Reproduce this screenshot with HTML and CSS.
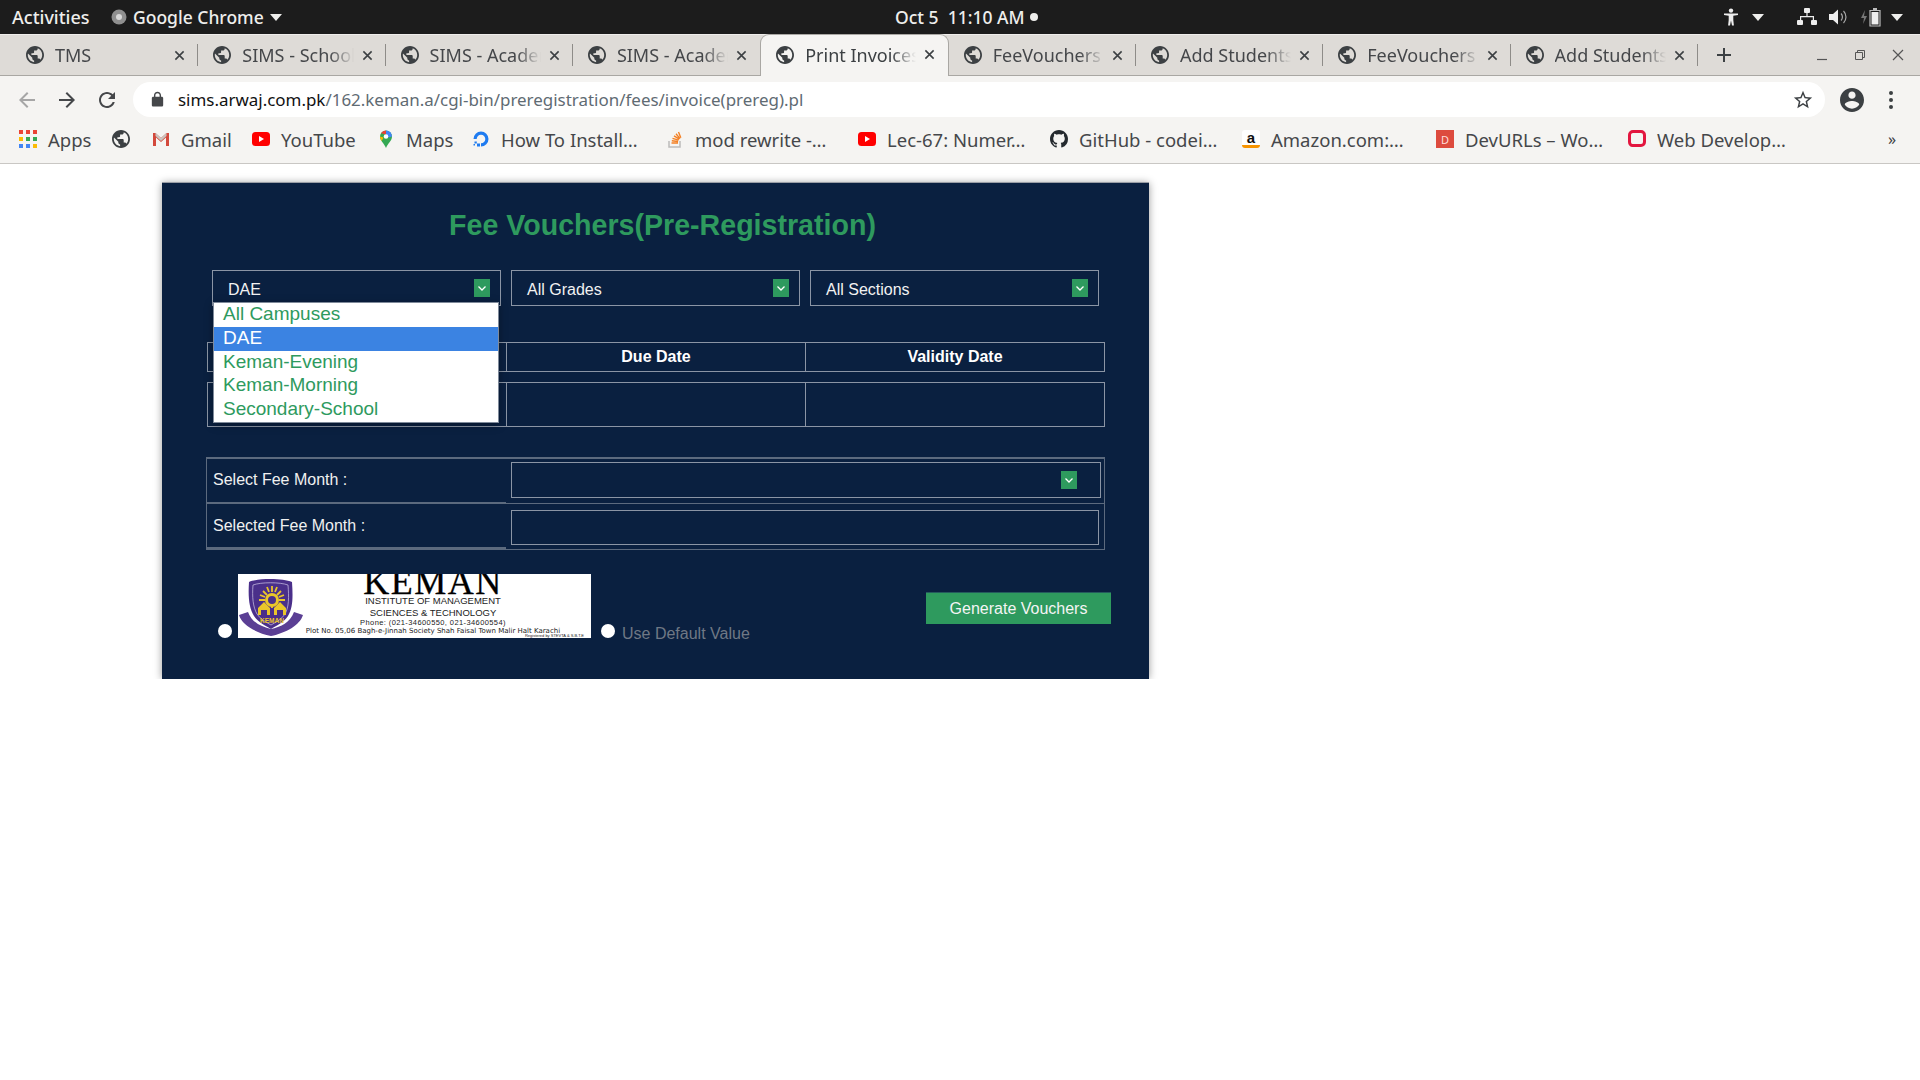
FILE: index.html
```html
<!DOCTYPE html>
<html lang="en">
<head>
  <meta charset="UTF-8">
  <meta name="viewport" content="width=device-width, initial-scale=1.0">
  <title>Fee Vouchers</title>
  <link rel="stylesheet" href="styles.css">
</head>
<body>
  <svg class="defs" width="0" height="0">
    <symbol id="globe" viewBox="2 2 20 20"><path d="M12 2C6.48 2 2 6.48 2 12s4.48 10 10 10 10-4.48 10-10S17.52 2 12 2zm-1 17.93c-3.95-.49-7-3.85-7-7.93 0-.62.08-1.21.21-1.79L9 15v1c0 1.1.9 2 2 2v1.93zm6.9-2.54c-.26-.81-1-1.39-1.9-1.39h-1v-3c0-.55-.45-1-1-1H8v-2h2c.55 0 1-.45 1-1V7h2c1.1 0 2-.9 2-2v-.41c2.93 1.19 5 4.06 5 7.41 0 2.08-.8 3.97-2.1 5.39z"/></symbol>
    <symbol id="close" viewBox="0 0 12 12"><path d="M1.5 1.5l9 9M10.5 1.5l-9 9" stroke="currentColor" stroke-width="1.7" fill="none"/></symbol>
    <symbol id="chev" viewBox="0 0 16 18"><path d="M4.5 7.5L8 11l3.5-3.5" stroke="#fff" stroke-width="1.3" fill="none"/></symbol>
    <symbol id="ytube" viewBox="0 0 18 18"><rect x="0" y="2" width="18" height="14" rx="3.5" fill="#f00"/><path d="M7 6v6l5-3z" fill="#fff"/></symbol>
  </svg>

  <!-- gnome panel -->
  <div class="topbar">
    <div class="topbar-left">
      <span class="activities">Activities</span>
      <svg class="app-icon" width="16" height="16" viewBox="0 0 16 16"><circle cx="8" cy="8" r="7.5" fill="#8f8f8f"/><circle cx="8" cy="8" r="3" fill="#d8d8d8"/></svg>
      <span>Google Chrome</span>
      <span class="caret"></span>
    </div>
    <div class="clock">Oct 5&nbsp; 11:10 AM<span class="clock-dot"></span></div>
    <div class="topbar-right">
      <svg class="ic-person" width="16" height="18" viewBox="0 0 16 18" fill="#eee"><circle cx="8" cy="2.6" r="2.2"/><path d="M1 5.5h14v1.6l-4.7.7V12l.6 5.5H9L8 12.5 7 17.5H5.100L5.700 12V7.800L1 7.100z"/></svg>
      <span class="caret"></span>
      <svg class="ic-net" width="20" height="18" viewBox="0 0 20 18" fill="#eee"><rect x="7" y="0" width="6" height="5" rx="1"/><rect x="0" y="12" width="6" height="5" rx="1"/><rect x="14" y="12" width="6" height="5" rx="1"/><path d="M9.400 5h1.200v3H17v4h-1.200V9.200H4.200V12H3V8h6.400z"/></svg>
      <svg class="ic-vol" width="19" height="18" viewBox="0 0 19 18"><path d="M0 6h4l5-4.500v15L4 12H0z" fill="#eee"/><path d="M12 5.500a5 5 0 0 1 0 7M14.500 3a8.500 8.500 0 0 1 0 12" stroke="#aaa" stroke-width="1.200" fill="none"/></svg>
      <svg class="ic-bat" width="20" height="20" viewBox="0 0 20 20"><path d="M4 3L0 11h3l-1 6 4-8H3z" fill="#777"/><path d="M9 3.500h10V19H9z" fill="none" stroke="#bbb" stroke-width="1.200"/><rect x="12" y="1" width="4" height="2" fill="#bbb"/><rect x="10.500" y="5" width="7" height="12.500" fill="#eee"/></svg>
      <span class="caret"></span>
    </div>
  </div>

  <!-- tab strip -->
  <div class="tabstrip">
    <div class="tab"><svg class="globe"><use href="#globe"/></svg><span class="tab-title">TMS</span><svg class="tab-x"><use href="#close"/></svg></div>
    <div class="tab"><svg class="globe"><use href="#globe"/></svg><span class="tab-title">SIMS - School Management</span><svg class="tab-x"><use href="#close"/></svg></div>
    <div class="tab"><svg class="globe"><use href="#globe"/></svg><span class="tab-title">SIMS - Academic Session</span><svg class="tab-x"><use href="#close"/></svg></div>
    <div class="tab tab-before-active"><svg class="globe"><use href="#globe"/></svg><span class="tab-title">SIMS - Academic Session</span><svg class="tab-x"><use href="#close"/></svg></div>
    <div class="tab tab-active"><svg class="globe"><use href="#globe"/></svg><span class="tab-title">Print Invoices</span><svg class="tab-x"><use href="#close"/></svg></div>
    <div class="tab"><svg class="globe"><use href="#globe"/></svg><span class="tab-title">FeeVouchers</span><svg class="tab-x"><use href="#close"/></svg></div>
    <div class="tab"><svg class="globe"><use href="#globe"/></svg><span class="tab-title">Add Students</span><svg class="tab-x"><use href="#close"/></svg></div>
    <div class="tab"><svg class="globe"><use href="#globe"/></svg><span class="tab-title">FeeVouchers</span><svg class="tab-x"><use href="#close"/></svg></div>
    <div class="tab"><svg class="globe"><use href="#globe"/></svg><span class="tab-title">Add Students</span><svg class="tab-x"><use href="#close"/></svg></div>
    <svg class="new-tab" width="16" height="16" viewBox="0 0 16 16"><path d="M8 1v14M1 8h14" stroke="#3c4043" stroke-width="2"/></svg>
    <div class="win-controls">
      <svg width="12" height="12" viewBox="0 0 12 12"><path d="M1 10.500h10" stroke="#555" stroke-width="1.200"/></svg>
      <svg width="12" height="12" viewBox="0 0 12 12"><path d="M1.500 3.500h7v7h-7zM3.500 3.500v-2h7v7h-2" stroke="#555" fill="none"/></svg>
      <svg width="12" height="12" viewBox="0 0 12 12"><path d="M1 1l10 10M11 1L1 11" stroke="#555" stroke-width="1.200"/></svg>
    </div>
  </div>

  <!-- toolbar -->
  <div class="toolbar">
    <svg class="tool tool-off" viewBox="0 0 24 24"><path d="M20 11H7.830l5.590-5.590L12 4l-8 8 8 8 1.410-1.410L7.830 13H20v-2z"/></svg>
    <svg class="tool" viewBox="0 0 24 24"><path d="M12 4l-1.410 1.410L16.170 11H4v2h12.170l-5.580 5.590L12 20l8-8z"/></svg>
    <svg class="tool" viewBox="0 0 24 24"><path d="M17.650 6.350C16.200 4.900 14.210 4 12 4c-4.420 0-7.990 3.580-7.990 8s3.570 8 7.990 8c3.730 0 6.840-2.550 7.730-6h-2.080c-.82 2.330-3.040 4-5.650 4-3.310 0-6-2.690-6-6s2.690-6 6-6c1.660 0 3.140.69 4.220 1.780L13 11h7V4l-2.350 2.350z"/></svg>
    <div class="omnibox">
      <svg class="lock" viewBox="0 0 24 24"><path d="M18 8h-1V6c0-2.760-2.240-5-5-5S7 3.240 7 6v2H6c-1.100 0-2 .9-2 2v10c0 1.100.9 2 2 2h12c1.100 0 2-.9 2-2V10c0-1.100-.9-2-2-2zM9 6c0-1.660 1.340-3 3-3s3 1.340 3 3v2H9V6z"/></svg>
      <span class="url"><b>sims.arwaj.com.pk</b>/162.keman.a/cgi-bin/preregistration/fees/invoice(prereg).pl</span>
      <svg class="star" viewBox="0 0 24 24"><path d="M22 9.240l-7.190-.62L12 2 9.190 8.630 2 9.240l5.460 4.730L5.820 21 12 17.270 18.180 21l-1.630-7.030L22 9.240zM12 15.400l-3.760 2.270 1-4.280-3.320-2.880 4.380-.38L12 6.100l1.710 4.040 4.380.38-3.320 2.880 1 4.280L12 15.400z"/></svg>
    </div>
    <svg class="account" viewBox="2 2 20 20"><path d="M12 2C6.480 2 2 6.480 2 12s4.480 10 10 10 10-4.480 10-10S17.520 2 12 2zm0 3c1.660 0 3 1.340 3 3s-1.340 3-3 3-3-1.340-3-3 1.340-3 3-3zm0 14.200c-2.500 0-4.710-1.280-6-3.220.03-1.990 4-3.080 6-3.080 1.990 0 5.970 1.090 6 3.080-1.290 1.940-3.500 3.220-6 3.220z"/></svg>
    <div class="dots"><i></i><i></i><i></i></div>
  </div>

  <!-- bookmarks -->
  <div class="bookmarks">
    <div class="bm">
      <svg class="bm-ic" viewBox="0 0 18 18"><g fill="#ea4335"><rect x="0" y="0" width="4" height="4"/><rect x="7" y="0" width="4" height="4"/><rect x="14" y="0" width="4" height="4"/></g><g fill="#fbbc04"><rect x="0" y="7" width="4" height="4"/></g><g fill="#34a853"><rect x="7" y="7" width="4" height="4"/><rect x="14" y="7" width="4" height="4"/></g><g fill="#4285f4"><rect x="0" y="14" width="4" height="4"/><rect x="7" y="14" width="4" height="4"/></g><rect x="14" y="14" width="4" height="4" fill="#fbbc04"/></svg>
      <span>Apps</span>
    </div>
    <div class="bm"><svg class="bm-ic globe-bm"><use href="#globe"/></svg></div>
    <div class="bm">
      <svg class="bm-ic" viewBox="0 0 18 18"><path d="M1 3h2.500L9 8l5.500-5H17v13h-3V7.500L9 12 4 7.500V16H1z" fill="#d3493c"/><path d="M3.500 3L9 8l5.500-5v3L9 11 3.500 6z" fill="#c9c5c0"/></svg>
      <span>Gmail</span>
    </div>
    <div class="bm"><svg class="bm-ic"><use href="#ytube"/></svg><span>YouTube</span></div>
    <div class="bm">
      <svg class="bm-ic" viewBox="0 0 18 18"><path d="M9 18C7 13 3 11 3 6.500a6 6 0 0 1 12 0C15 11 11 13 9 18z" fill="#34a853"/><path d="M4 3.300A6 6 0 0 1 9 .5v4z" fill="#ea4335"/><path d="M9 .5a6 6 0 0 1 6 6l-3.500 1L9 4.500z" fill="#4285f4"/><path d="M3 6.500l3.500 1L4.700 11C3.800 9.500 3 8.300 3 6.500z" fill="#fbbc04"/><circle cx="9" cy="6.500" r="2.300" fill="#fff"/></svg>
      <span>Maps</span>
    </div>
    <div class="bm">
      <svg class="bm-ic" viewBox="0 0 18 18"><path d="M9 16.500v-3.200a4.300 4.300 0 1 0-4.300-4.300H1.500A7.500 7.500 0 1 1 9 16.500z" fill="#1f7bf0"/><path d="M5 13.500h3v3H5zM2.500 11.500h2.300v2H2.500zM1.500 14h1.500v1.500H1.500z" fill="#1f7bf0"/></svg>
      <span>How To Install…</span>
    </div>
    <div class="bm">
      <svg class="bm-ic" viewBox="0 0 18 18"><path d="M3 11v6h11v-6" fill="none" stroke="#bcbbbb" stroke-width="1.500"/><path d="M5.500 13h6.500M5.800 10.800l6.300.7M6.500 8.300l6.100 1.800M8 5.800l5.400 3.300M10 3.800l4 4.800M12.500 2l2.300 5.800" stroke="#f48024" stroke-width="1.400" fill="none"/></svg>
      <span>mod rewrite -…</span>
    </div>
    <div class="bm"><svg class="bm-ic"><use href="#ytube"/></svg><span>Lec-67: Numer…</span></div>
    <div class="bm">
      <svg class="bm-ic" viewBox="0 0 16 16"><path fill="#24292e" d="M8 0C3.580 0 0 3.580 0 8c0 3.540 2.290 6.530 5.470 7.590.4.070.55-.17.55-.38 0-.19-.01-.82-.01-1.490-2.010.37-2.530-.49-2.690-.94-.09-.23-.48-.94-.82-1.130-.28-.15-.68-.52-.01-.53.630-.01 1.080.58 1.230.82.720 1.210 1.870.870 2.330.66.070-.52.280-.870.510-1.070-1.780-.2-3.640-.89-3.640-3.950 0-.87.310-1.590.820-2.150-.08-.2-.36-1.020.08-2.120 0 0 .67-.21 2.200.82.640-.18 1.320-.27 2-.27s1.360.09 2 .27c1.530-1.040 2.200-.82 2.200-.82.440 1.100.160 1.920.08 2.120.51.560.82 1.270.82 2.150 0 3.070-1.870 3.750-3.650 3.950.29.250.54.730.54 1.480 0 1.070-.01 1.930-.01 2.200 0 .21.150.46.550.38A8.013 8.013 0 0 0 16 8c0-4.420-3.580-8-8-8z"/></svg>
      <span>GitHub - codei…</span>
    </div>
    <div class="bm">
      <span class="bm-ic amazon">a</span>
      <span>Amazon.com:…</span>
    </div>
    <div class="bm"><span class="bm-ic devurls">D</span><span>DevURLs – Wo…</span></div>
    <div class="bm">
      <svg class="bm-ic" viewBox="0 0 18 18"><path d="M5 1.500h8a3.500 3.500 0 0 1 3.500 3.500v7c0 2-1.500 3.500-3.500 3.500H4.500C3 15.500 1.500 14 1.500 12V5A3.500 3.500 0 0 1 5 1.500z" fill="none" stroke="#e3163f" stroke-width="3"/></svg>
      <span>Web Develop…</span>
    </div>
    <span class="bm-more">»</span>
  </div>

  <!-- page -->
  <div class="page">
    <div class="panel">
      <h2 class="panel-title">Fee Vouchers(Pre-Registration)</h2>

      <div class="filters">
        <div class="dropdown">DAE<span class="arrow"><svg><use href="#chev"/></svg></span></div>
        <div class="dropdown">All Grades<span class="arrow"><svg><use href="#chev"/></svg></span></div>
        <div class="dropdown">All Sections<span class="arrow"><svg><use href="#chev"/></svg></span></div>
      </div>

      <ul class="option-list">
        <li>All Campuses</li>
        <li class="selected">DAE</li>
        <li>Keman-Evening</li>
        <li>Keman-Morning</li>
        <li>Secondary-School</li>
      </ul>

      <div class="dates-head">
        <div></div>
        <div>Due Date</div>
        <div>Validity Date</div>
      </div>
      <div class="dates-body">
        <div></div>
        <div></div>
        <div></div>
      </div>

      <div class="month-form">
        <label class="month-label">Select Fee Month :</label>
        <div class="month-cell"><div class="month-box month-select"><span class="arrow"><svg><use href="#chev"/></svg></span></div></div>
        <label class="month-label month-label-last">Selected Fee Month :</label>
        <div class="month-cell month-cell-last"><div class="month-box month-input"></div></div>
      </div>

      <div class="bottom-row">
        <span class="radio radio-logo"></span>
        <div class="logo">
          <svg class="crest" width="66" height="62" viewBox="0 0 66 62">
            <path d="M1 40l9-3c4 11 14 15 23 17 9-2 19-6 23-17l9 3c-3 10-17 18-32 21C18 58 4 50 1 40z" fill="#5b3f94"/>
            <path d="M11 7c9-4 34-4 43 0 1 15 1 26-4 34-4 6-12 10-17 13-5-3-13-7-17-13-5-8-6-19-5-34z" fill="#4a2f8a"/>
            <path d="M15 10c8-3 27-3 35 0 1 12 1 22-3 29-3 5-9 8-14 11-5-3-11-6-14-11-4-7-5-17-4-29z" fill="none" stroke="#cfc6e6" stroke-width=".7"/>
            <path d="M34 11v6M34 33v-3M21 25h6M47 25h-6M25 16l4 4M43 16l-4 4M29 12l2 5M39 12l-2 5M22 20l5 2M46 20l-5 2" stroke="#eac62a" stroke-width="1.800"/>
            <circle cx="34" cy="25" r="7" fill="#eac62a"/>
            <circle cx="34" cy="25" r="4" fill="#4a2f8a"/>
            <path d="M20 40v-7l6-6 6 6v7h-3v-5h-6v5zM36 40v-7l6-6 6 6v7h-3v-5h-6v5z" fill="#eac62a"/>
            <text x="34" y="47.500" class="crest-name">KEMAN</text>
          </svg>
          <div class="logo-text">
            <div class="logo-name">KEMAN</div>
            <div class="logo-line">INSTITUTE OF MANAGEMENT</div>
            <div class="logo-line">SCIENCES &amp; TECHNOLOGY</div>
            <div class="logo-phone">Phone: (021-34600550, 021-34600554)</div>
            <div class="logo-addr">Plot No. 05,06 Bagh-e-Jinnah Society Shah Faisal Town Malir Halt Karachi</div>
            <div class="logo-reg">Registered by STEVTA &amp; S.B.T.E</div>
          </div>
        </div>
        <span class="radio radio-default"></span>
        <span class="default-label">Use Default Value</span>
        <button class="generate">Generate Vouchers</button>
      </div>
    </div>
  </div>
</body>
</html>
```

FILE: styles.css
```css
* {
  box-sizing: border-box;
}
body {
  margin: 0;
  padding: 0;
  background-color: #fff;
  font-family: "Noto Sans", sans-serif;
  overflow: hidden;
}
.defs {
  position: absolute;
}

/* gnome panel */
.topbar {
  display: grid;
  grid-template-columns: 895px 145px 1fr;
  height: 34px;
  background-color: #1c1c1c;
  color: #eeeeec;
  font-size: 17.500px;
  font-weight: 500;
  align-items: center;
}
.topbar-left {
  display: flex;
  align-items: center;
  padding-left: 12px;
}
.activities {
  width: 99px;
  font-size: 18px;
}
.app-icon {
  margin: 0 6px 0 0;
}
.caret {
  display: inline-block;
  width: 0;
  height: 0;
  border-left: 6px solid transparent;
  border-right: 6px solid transparent;
  border-top: 7px solid #eeeeec;
}
.topbar-left .caret {
  margin-left: 6px;
}
.clock {
  display: flex;
  align-items: center;
  white-space: nowrap;
}
.clock-dot {
  width: 8px;
  height: 8px;
  border-radius: 50%;
  background-color: #eeeeec;
  margin-left: 5px;
}
.topbar-right {
  display: flex;
  align-items: center;
  padding-left: 683px;
}
.topbar-right .caret {
  margin-left: 13px;
}
.ic-net {
  margin-left: 33px;
}
.ic-vol {
  margin-left: 12px;
}
.ic-bat {
  margin-left: 13px;
}
.topbar-right .ic-bat + .caret {
  margin-left: 10px;
}

/* tabs */
.tabstrip {
  display: flex;
  align-items: flex-end;
  height: 42px;
  padding-left: 11px;
  background-color: #dedbd7;
  border-top: 1px solid #efedeb;
  border-bottom: 1px solid #a9a7a3;
}
.tab {
  position: relative;
  display: flex;
  align-items: center;
  flex: none;
  width: 187.300px;
  height: 40px;
  padding: 0 13px 0 15px;
  font-size: 18px;
  color: #45474a;
}
.tab::after {
  content: "";
  position: absolute;
  right: 0;
  top: 9px;
  height: 22px;
  width: 1px;
  background-color: #8e8c88;
}
.tab-before-active::after,
.tab-active::after {
  display: none;
}
.tab-active {
  width: 188.500px;
  padding-bottom: 2px;
  background-color: #f5f4f2;
  border: 1px solid #a9a7a3;
  border-bottom: none;
  border-radius: 9px 9px 0 0;
  height: 42px;
  margin-bottom: -1px;
  color: #3c4043;
}
.globe {
  width: 18px;
  height: 18px;
  flex: none;
  fill: #3c4043;
}
.tab-title {
  flex: 1;
  margin-left: 11px;
  overflow: hidden;
  white-space: nowrap;
  -webkit-mask-image: linear-gradient(to right, #000 78%, transparent 100%);
  mask-image: linear-gradient(to right, #000 78%, transparent 100%);
}
.tab-x {
  width: 11px;
  height: 11px;
  flex: none;
  margin-left: 8px;
  color: #3c4043;
}
.new-tab {
  align-self: center;
  margin-left: 18px;
}
.win-controls {
  display: flex;
  align-self: center;
  gap: 26px;
  margin-left: 84px;
}

/* toolbar */
.toolbar {
  display: flex;
  align-items: center;
  height: 47px;
  padding: 0 0 0 15px;
  background-color: #f5f4f2;
}
.tool {
  width: 24px;
  height: 24px;
  fill: #45474a;
  margin-right: 16px;
}
.tool-off {
  fill: #a6a6a6;
}
.omnibox {
  display: flex;
  align-items: center;
  width: 1692px;
  height: 35px;
  margin-left: -2px;
  padding: 0 11px 0 16px;
  border-radius: 18px;
  background-color: #fff;
}
.lock {
  width: 17px;
  height: 17px;
  fill: #45474a;
}
.url {
  flex: 1;
  margin-left: 12px;
  font-size: 16.950px;
  color: #5f6b73;
  white-space: nowrap;
}
.url b {
  font-weight: 400;
  color: #111;
}
.star {
  width: 22px;
  height: 22px;
  fill: #3c4043;
}
.account {
  width: 24px;
  height: 24px;
  margin-left: 15px;
  fill: #3c4043;
}
.dots {
  display: flex;
  flex-direction: column;
  gap: 3px;
  margin-left: 25px;
}
.dots i {
  display: block;
  width: 4px;
  height: 4px;
  border-radius: 50%;
  background-color: #3c4043;
}

/* bookmarks */
.bookmarks {
  display: grid;
  grid-template-columns: 93px 40px 100px 125px 95px 194px 192px 192px 192px 194px 192px 1fr 20px;
  align-items: center;
  height: 41px;
  padding: 0 12px 8px 19px;
  background-color: #f5f4f2;
  border-bottom: 1px solid #c9c7c4;
  font-size: 18.500px;
  color: #45474a;
}
.bm {
  display: flex;
  align-items: center;
  gap: 11px;
  white-space: nowrap;
}
.bm-ic {
  width: 18px;
  height: 18px;
  flex: none;
}
.globe-bm {
  fill: #3c4043;
}
.amazon {
  display: flex;
  justify-content: center;
  background-color: #fff;
  color: #111;
  font-family: "Liberation Sans", sans-serif;
  font-weight: 700;
  font-size: 15px;
  line-height: 15px;
  border-bottom: 3px solid #f79400;
  border-radius: 3px;
}
.devurls {
  display: flex;
  align-items: center;
  justify-content: center;
  background-color: #dd4b3e;
  color: #ffdcd8;
  font-size: 11px;
}
.bm-more {
  font-size: 16px;
  color: #3c4043;
}

/* page */
.page {
  padding: 19px 0 0 162px;
}
.panel {
  position: relative;
  width: 987px;
  height: 496px;
  background-color: #0a2040;
  box-shadow: 0 2px 0 #7f8794, 0 -1px 0 #9a9ea6, 0 0 8px rgba(0, 0, 0, 0.4);
  font-family: "Liberation Sans", sans-serif;
}
.panel-title {
  margin: 0;
  height: 87px;
  padding: 25px 0 0 14px;
  font-size: 28.600px;
  line-height: 34px;
  text-align: center;
  color: #2e9a5e;
}
.filters {
  display: flex;
  gap: 10px;
  padding-left: 50px;
}
.dropdown {
  display: flex;
  align-items: center;
  justify-content: space-between;
  width: 289px;
  height: 36px;
  padding: 3px 10px 0 15px;
  border: 1px solid #8b95a5;
  font-size: 16px;
  color: #f2f2f2;
}
.dropdown .arrow {
  margin-top: -3px;
}
.arrow {
  display: block;
  width: 16px;
  height: 18px;
  background-color: #2e9a5e;
}
.arrow svg {
  display: block;
  width: 16px;
  height: 18px;
}
.option-list {
  position: absolute;
  left: 51px;
  top: 119px;
  width: 286px;
  margin: 0;
  padding: 0;
  list-style: none;
  background-color: #fff;
  border: 1px solid #7f8a9a;
  font-size: 19px;
  color: #2e9a5e;
  box-shadow: 0 2px 8px rgba(0, 0, 0, 0.35);
}
.option-list li {
  height: 23.800px;
  padding-left: 9px;
  line-height: 22px;
}
.option-list .selected {
  background-color: #3b83e2;
  color: #fff;
}
.dates-head,
.dates-body {
  display: grid;
  grid-template-columns: 298px 299px 1fr;
  width: 898px;
  margin-left: 45px;
  border: 1px solid #8b95a5;
}
.dates-head {
  height: 30px;
  margin-top: 36px;
  color: #fff;
  font-size: 16px;
  font-weight: 700;
  text-align: center;
  line-height: 28px;
}
.dates-body {
  height: 45px;
  margin-top: 10px;
}
.dates-head div + div,
.dates-body div + div {
  border-left: 1px solid #8b95a5;
}
.month-form {
  display: grid;
  grid-template-columns: 299px 1fr;
  width: 899px;
  margin: 30px 0 0 44px;
  border: 1px solid #5c6a7e;
  border-top-width: 2px;
}
.month-label {
  display: flex;
  align-items: center;
  height: 45px;
  padding: 0 0 1px 6px;
  font-size: 16px;
  color: #f0f0f0;
  border-bottom: 2px solid #5c6a7e;
}
.month-label-last {
  padding: 1px 0 0 6px;
}
.month-cell {
  padding: 3px 3px 5px 5px;
  height: 45px;
  border-bottom: 1px solid #5c6a7e;
}
.month-cell-last {
  padding: 6px 5px 4px 5px;
  border-bottom: none;
}
.month-box {
  height: 100%;
  border: 1px solid #8b95a5;
}
.month-select {
  display: flex;
  align-items: center;
  justify-content: flex-end;
  padding-right: 23px;
}
.bottom-row {
  display: flex;
  height: 64px;
  margin-top: 24px;
  align-items: flex-end;
}
.radio {
  display: block;
  flex: none;
  width: 14px;
  height: 14px;
  border-radius: 50%;
  background-color: #fff;
}
.radio-logo {
  margin: 0 6px 0 56px;
}
.radio-default {
  margin-left: 10px;
}
.default-label {
  margin: 0 0 -5px 7px;
  font-size: 16px;
  color: #6f7885;
}
.logo {
  display: flex;
  flex: none;
  width: 353px;
  height: 64px;
  overflow: hidden;
  background-color: #fff;
  color: #222;
}
.crest {
  flex: none;
  margin-top: 1px;
}
.crest-name {
  font-family: "Liberation Sans", sans-serif;
  font-size: 6.500px;
  font-weight: 700;
  text-anchor: middle;
  fill: #eac62a;
}
.logo-text {
  flex: 1;
  display: flex;
  flex-direction: column;
  align-items: center;
  padding-right: 29px;
  white-space: nowrap;
}
.logo-name {
  font-family: "Liberation Serif", serif;
  font-size: 36px;
  line-height: 16px;
  letter-spacing: 1.500px;
  margin-bottom: 4px;
  -webkit-text-stroke: 0.3px #000;
  color: #000;
}
.logo-line {
  font-size: 9.500px;
  line-height: 11px;
  margin-top: 1px;
}
.logo-phone {
  font-size: 7.500px;
  line-height: 9px;
  letter-spacing: 0.4px;
}
.logo-addr {
  font-size: 7px;
  line-height: 9px;
  font-family: "DejaVu Sans", sans-serif;
}
.logo-reg {
  align-self: flex-end;
  margin: -2px -22px 0 0;
  font-size: 4px;
  line-height: 4px;
}
.generate {
  display: block;
  align-self: flex-start;
  flex: none;
  width: 185px;
  height: 32px;
  margin: 18px 38px 0 auto;
  border: none;
  border-top: 1px solid #245b5c;
  background-color: #2e9a5e;
  color: #f4f4f4;
  font-family: "Liberation Sans", sans-serif;
  font-size: 16px;
}
```
